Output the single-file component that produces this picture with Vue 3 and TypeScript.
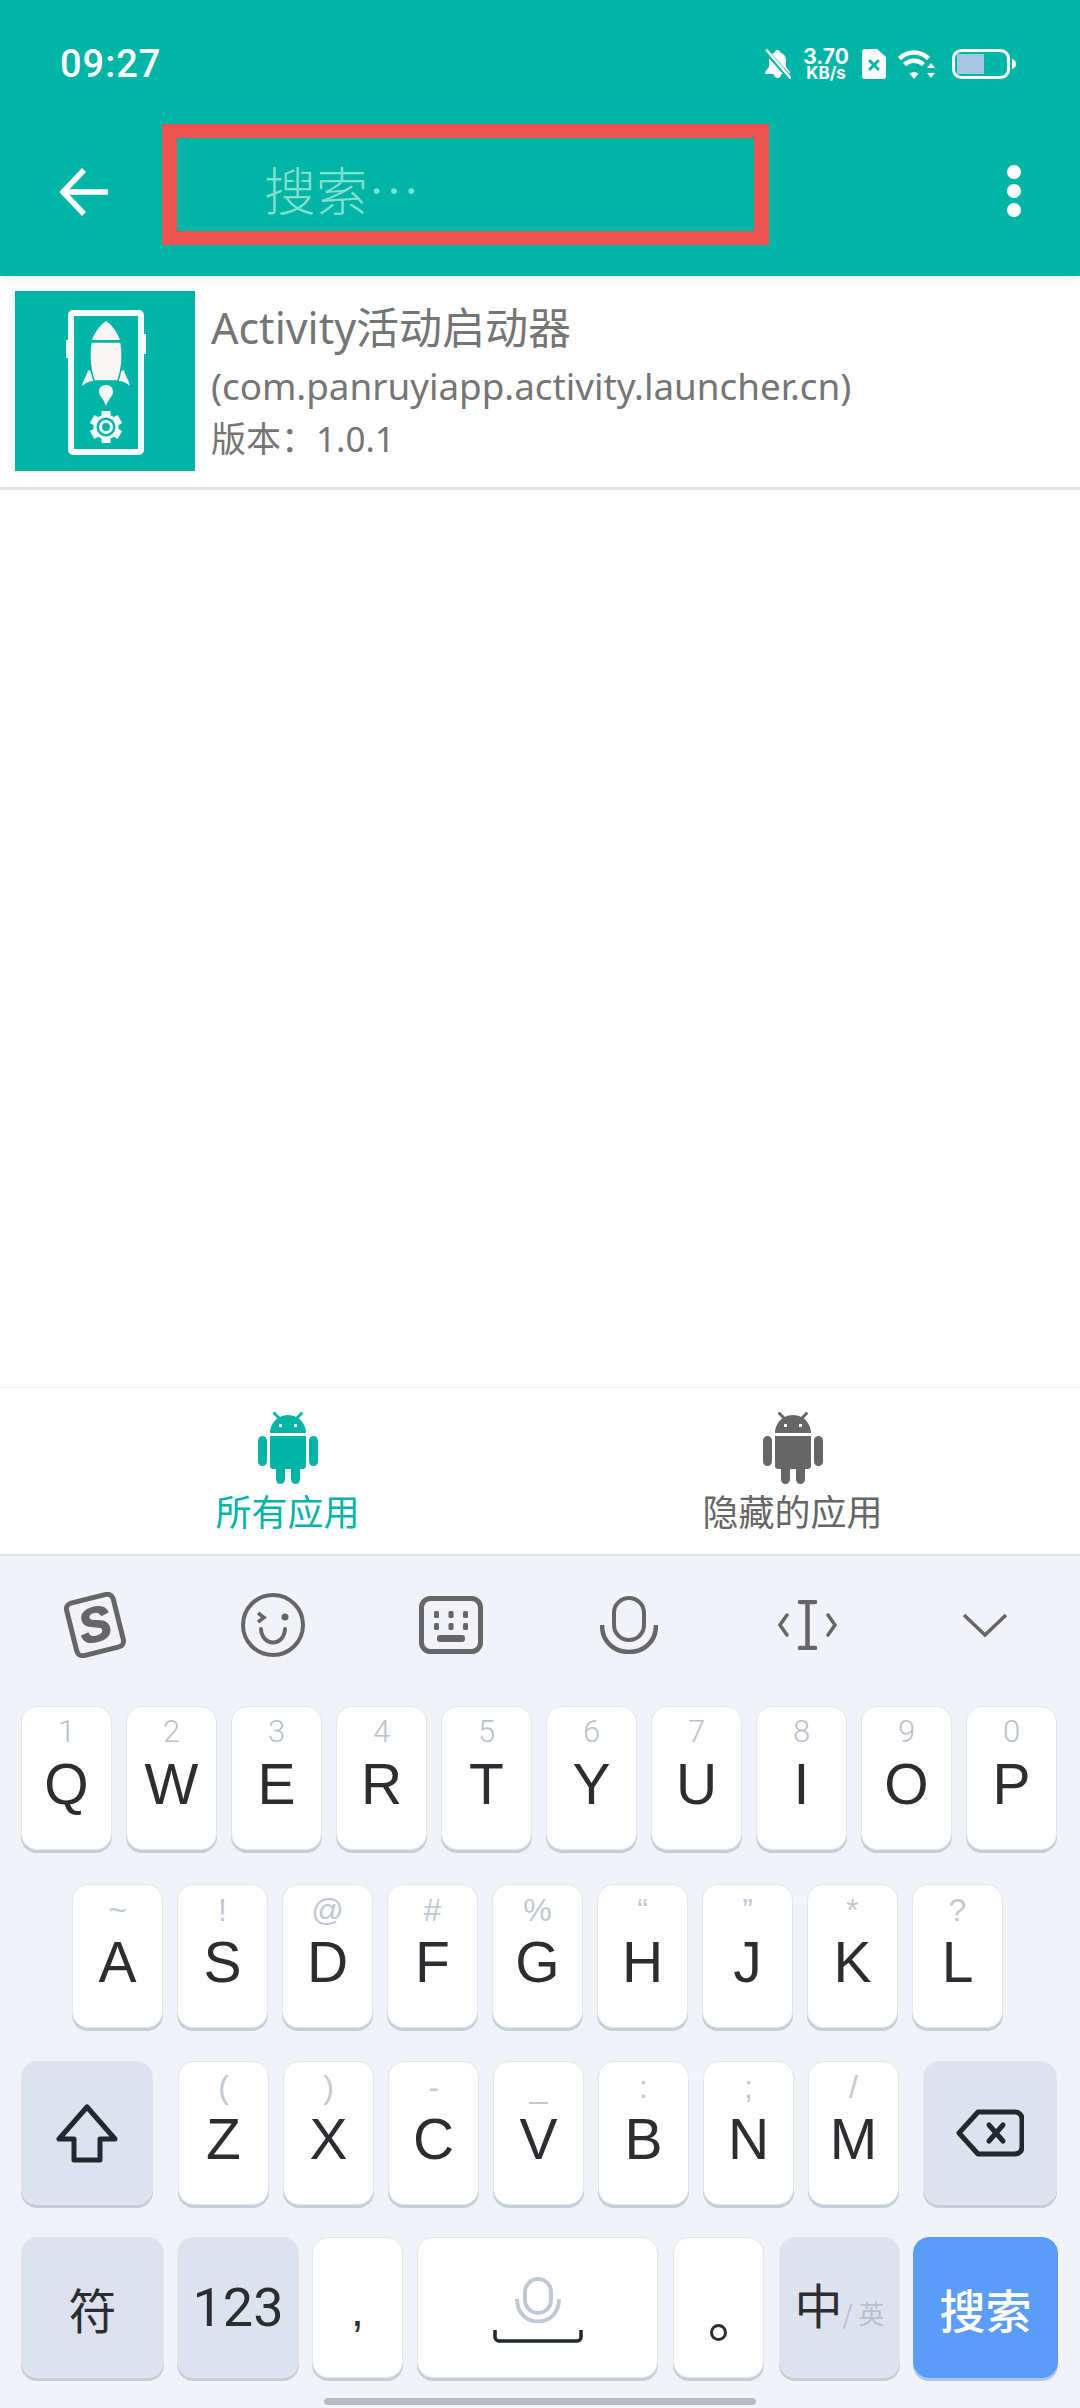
<template>
  <div class="screen">
    <header class="header">
      <div class="status">
        <span class="time">09:27</span>
        <div class="status-icons">
          <svg class="bell" viewBox="0 0 27 30">
            <path d="M13.500 1c-1.600 0-2.600 1-2.800 2.400C7 4.600 5 7.500 5 11.500v6.500L1.500 22.500c-.8 1.100-.2 2.500 1.200 2.500h7c.3 2.400 1.700 4 3.800 4s3.500-1.600 3.800-4h7c1.400 0 2-1.400 1.200-2.500L22 18v-6.500c0-4-2-6.900-5.700-8.100C16.100 2 15.100 1 13.500 1z" fill="#fff" />
            <path d="M2 2l23 26" stroke="#00b4a6" stroke-width="5" />
            <path d="M3 1.500l23 27" stroke="#fff" stroke-width="2.600" stroke-linecap="round" />
          </svg>
          <div class="speed">
            <span class="speed-num">3.70</span>
            <span class="speed-unit">KB/s</span>
          </div>
          <svg class="sim" viewBox="0 0 24 30">
            <path d="M3 0h12l9 8v19a3 3 0 0 1-3 3H3a3 3 0 0 1-3-3V3a3 3 0 0 1 3-3z" fill="#fff" />
            <path d="M8 12l8 8M16 12l-8 8" stroke="#00b4a6" stroke-width="3" stroke-linecap="round" />
          </svg>
          <svg class="wifi" viewBox="0 0 37 30">
            <path d="M1.500 9.500C10 1.500 22 1.500 30.500 9.500" fill="none" stroke="#fff" stroke-width="4.500" />
            <path d="M6.500 15.500C12 10.500 20 10.500 25.500 15.500" fill="none" stroke="#fff" stroke-width="4.500" />
            <path d="M11.500 24.500c3-2 6-2 9 0L16 30z" fill="#fff" />
            <path d="M33 14l4 5h-8zM33 29l-4-5h8z" fill="#fff" />
          </svg>
          <svg class="battery" viewBox="0 0 64 30">
            <rect x="1.500" y="1.500" width="55" height="27" rx="8" fill="none" stroke="#fff" stroke-width="3" />
            <rect x="5" y="5" width="27" height="20" fill="#a9c5e4" />
            <path d="M60 10c2.500.5 4 2.500 4 5s-1.500 4.500-4 5z" fill="#fff" />
          </svg>
        </div>
      </div>
      <div class="toolbar">
        <svg class="back" viewBox="0 0 48 48">
          <path d="M24 2L3 24l21 22M4 24h44" fill="none" stroke="#fff" stroke-width="5.500" />
        </svg>
        <div class="search-box">
          <span class="placeholder">搜索…</span>
        </div>
        <div class="more">
          <i></i><i></i><i></i>
        </div>
      </div>
    </header>

    <div class="app-row">
      <svg class="app-icon" viewBox="0 0 180 180">
        <rect width="180" height="180" fill="#00b4a6" />
        <rect x="56" y="22" width="70" height="139" rx="2" fill="none" stroke="#f6fbfa" stroke-width="6" />
        <rect x="51" y="49" width="3" height="18" fill="#f6fbfa" />
        <rect x="128" y="43" width="3" height="20" fill="#f6fbfa" />
        <path d="M91 30c6 4 11 11 14 19H77c3-8 8-15 14-19z" fill="#f8f6f5" />
        <path d="M73 79c-1 6-5 10-6 16 3-3 7-5 12-5l2-8zM109 79c1 6 5 10 6 16-3-3-7-5-12-5l-2-8z" fill="#f8f6f5" />
        <path d="M76 51h30c2 12 1 27-3 39H79c-4-12-5-27-3-39z" fill="#f8f6f5" stroke="#00b4a6" stroke-width="1.500" />
        <path d="M91 94c5 0 7 3 7 7 0 4-5 7-7 14-2-7-7-10-7-14 0-4 2-7 7-7z" fill="#f8f6f5" />
        <g fill="#f6fbfa">
          <rect v-for="a in [0, 60, 120, 180, 240, 300]" :key="a" x="86.500" y="120" width="9" height="7" :transform="`rotate(${a} 91 136)`" />
          <circle cx="91" cy="136" r="12.500" />
        </g>
        <circle cx="91" cy="136" r="9.500" fill="#00b4a6" />
        <circle cx="91" cy="136" r="7" fill="#f6fbfa" />
        <circle cx="91" cy="136" r="4" fill="#00b4a6" />
      </svg>
      <div class="app-info">
        <div class="app-title">Activity活动启动器</div>
        <div class="app-pkg">(com.panruyiapp.activity.launcher.cn)</div>
        <div class="app-ver">版本：1.0.1</div>
      </div>
    </div>

    <div class="spacer"></div>

    <nav class="tabs">
      <div v-for="t in tabs" :key="t.label" :class="['tab', { active: t.active }]">
        <svg class="android" viewBox="2 0 20 24">
          <path d="M6 18c0 .55.45 1 1 1h1v3.500c0 .83.67 1.500 1.500 1.500s1.500-.67 1.500-1.500V19h2v3.500c0 .83.67 1.500 1.500 1.500s1.500-.67 1.500-1.500V19h1c.55 0 1-.45 1-1V8H6v10zM3.500 8C2.670 8 2 8.670 2 9.500v7c0 .83.67 1.500 1.500 1.500S5 17.330 5 16.500v-7C5 8.670 4.330 8 3.500 8zm17 0c-.83 0-1.500.67-1.500 1.500v7c0 .83.67 1.500 1.500 1.500s1.500-.67 1.500-1.500v-7c0-.83-.67-1.500-1.500-1.500zm-4.970-5.840l1.300-1.300c.2-.2.2-.51 0-.71-.2-.2-.51-.2-.71 0l-1.480 1.480C13.850 1.230 12.950 1 12 1c-.96 0-1.860.23-2.660.63L7.850.15c-.2-.2-.51-.2-.71 0-.2.2-.2.51 0 .71l1.310 1.310C6.970 3.260 6 5.010 6 7h12c0-1.990-.97-3.750-2.470-4.840zM10 5H9V4h1v1zm5 0h-1V4h1v1z" />
        </svg>
        <span>{{ t.label }}</span>
      </div>
    </nav>

    <section class="keyboard">
      <div class="kb-tools">
        <svg class="tool" style="width:66px;height:66px" viewBox="0 0 66 66">
          <g transform="rotate(-14 33 33)">
            <rect x="9" y="6" width="48" height="54" rx="6" fill="none" stroke="#666" stroke-width="5" />
            <text x="33" y="49" text-anchor="middle" class="sogou">S</text>
          </g>
        </svg>
        <svg class="tool" style="width:64px;height:64px" viewBox="0 0 64 64">
          <circle cx="32" cy="32" r="30" fill="none" stroke="#666" stroke-width="4" />
          <path d="M17 20l6 4.500-6 4.500" fill="none" stroke="#666" stroke-width="3.500" />
          <circle cx="44" cy="24" r="3.500" fill="#666" />
          <path d="M20 36c1 18 23 18 24 0" fill="none" stroke="#666" stroke-width="4" stroke-linecap="round" />
        </svg>
        <svg class="tool" style="width:64px;height:58px" viewBox="0 0 64 58">
          <rect x="2.500" y="2.500" width="59" height="53" rx="9" fill="none" stroke="#666" stroke-width="5" />
          <g fill="#666">
            <rect x="15" y="15" width="5" height="7" rx="1.500" />
            <rect x="29.500" y="15" width="5" height="7" rx="1.500" />
            <rect x="44" y="15" width="5" height="7" rx="1.500" />
            <rect x="15" y="27" width="5" height="7" rx="1.500" />
            <rect x="29.500" y="27" width="5" height="7" rx="1.500" />
            <rect x="44" y="27" width="5" height="7" rx="1.500" />
            <rect x="18" y="39" width="28" height="7" rx="3" />
          </g>
        </svg>
        <svg class="tool" style="width:58px;height:58px" viewBox="0 0 58 58">
          <rect x="14" y="2" width="30" height="42" rx="15" fill="none" stroke="#666" stroke-width="4" />
          <path d="M2 29c0 36 54 36 54 0" fill="none" stroke="#666" stroke-width="4.500" />
        </svg>
        <svg class="tool" style="width:59px;height:50px" viewBox="0 0 59 50">
          <path d="M22 2h15M22 48h15M29.500 2v46" stroke="#666" stroke-width="4.500" stroke-linecap="round" />
          <path d="M9 15l-7 10 7 10M50 15l7 10-7 10" fill="none" stroke="#666" stroke-width="3.500" stroke-linecap="round" />
        </svg>
        <svg class="tool" style="width:46px;height:24px" viewBox="0 0 46 24">
          <path d="M2 2l21 20L44 2" fill="none" stroke="#666" stroke-width="3.500" />
        </svg>
      </div>

      <div class="kb-row first">
        <button v-for="k in row1" :key="k[0]" class="key">
          <span class="hint">{{ k[1] }}</span>
          <span class="letter">{{ k[0] }}</span>
        </button>
      </div>
      <div class="kb-row second">
        <button v-for="k in row2" :key="k[0]" class="key">
          <span class="hint mark">{{ k[1] }}</span>
          <span class="letter">{{ k[0] }}</span>
        </button>
      </div>
      <div class="kb-row third">
        <button class="key fn shift">
          <svg width="62" height="59" viewBox="0 0 62 59">
            <path d="M31 3L3 35h15v21h26V35h15z" fill="none" stroke="#23272e" stroke-width="5" stroke-linejoin="round" />
          </svg>
        </button>
        <button v-for="k in row3" :key="k[0]" class="key">
          <span class="hint mark">{{ k[1] }}</span>
          <span class="letter">{{ k[0] }}</span>
        </button>
        <button class="key fn del">
          <svg width="68" height="48" viewBox="0 0 68 48">
            <path d="M22 3h37a7 7 0 0 1 7 7v28a7 7 0 0 1-7 7H22L3 24z" fill="none" stroke="#23272e" stroke-width="5" stroke-linejoin="round" />
            <path d="M33 16l14 16M47 16L33 32" stroke="#23272e" stroke-width="5" stroke-linecap="round" />
          </svg>
        </button>
      </div>
      <div class="kb-row fourth">
        <button class="key fn sym"><span class="sym-text">符</span></button>
        <button class="key fn num"><span class="num-text">123</span></button>
        <button class="key punct"><span class="comma">,</span></button>
        <button class="key space">
          <svg width="46" height="46" viewBox="0 0 46 46">
            <rect x="10" y="2" width="26" height="34" rx="13" fill="none" stroke="#c0c8d8" stroke-width="4" />
            <path d="M2 22c0 30 42 30 42 0" fill="none" stroke="#c0c8d8" stroke-width="4" />
          </svg>
          <svg width="90" height="13" viewBox="0 0 90 13">
            <path d="M2 0v7a4 4 0 0 0 4 4h78a4 4 0 0 0 4-4V0" fill="none" stroke="#23272e" stroke-width="3.500" />
          </svg>
        </button>
        <button class="key punct period"><span class="dot"></span></button>
        <button class="key fn lang"><span class="zh">中</span><span class="en">/ 英</span></button>
        <button class="key go">搜索</button>
      </div>
      <div class="home-bar"></div>
    </section>
  </div>
</template>

<script setup lang="ts">
interface Tab { label: string; active: boolean }

const tabs: Tab[] = [
  { label: '所有应用', active: true },
  { label: '隐藏的应用', active: false },
]

const row1 = [['Q', '1'], ['W', '2'], ['E', '3'], ['R', '4'], ['T', '5'], ['Y', '6'], ['U', '7'], ['I', '8'], ['O', '9'], ['P', '0']]
const row2 = [['A', '~'], ['S', '!'], ['D', '@'], ['F', '#'], ['G', '%'], ['H', '“'], ['J', '”'], ['K', '*'], ['L', '?']]
const row3 = [['Z', '('], ['X', ')'], ['C', '-'], ['V', '_'], ['B', ':'], ['N', ';'], ['M', '/']]
</script>

<style>
html, body { margin: 0; background: #fff; }
</style>

<style scoped>
.screen {
  width: 1080px;
  height: 2408px;
  display: flex;
  flex-direction: column;
  overflow: hidden;
  background: #fff;
  font-family: "Noto Sans", "Noto Sans CJK SC", sans-serif;
}
.header {
  height: 276px;
  flex-shrink: 0;
  background: #00b4a6;
  box-shadow: 0 3px 8px rgba(0, 0, 0, 0.08);
  z-index: 1;
}
.status {
  height: 124px;
  padding: 0 64px 0 60px;
  display: flex;
  justify-content: space-between;
  align-items: flex-start;
  box-sizing: border-box;
}
.time {
  margin-top: 41px;
  font: 500 38px/46px Roboto, sans-serif;
  letter-spacing: 1px;
  color: #fff;
}
.status-icons {
  display: flex;
  align-items: center;
  margin-top: 47px;
  height: 34px;
}
.bell { width: 27px; height: 30px; }
.speed {
  width: 46px;
  margin-left: 12px;
  display: flex;
  flex-direction: column;
  align-items: center;
  color: #fff;
  font-family: Inter, sans-serif;
  font-weight: 700;
  line-height: 1;
}
.speed-num { font-size: 21px; height: 19px; line-height: 19px; }
.speed-unit { font-size: 17px; height: 15px; line-height: 15px; }
.sim { width: 24px; height: 30px; margin-left: 13px; }
.wifi { width: 37px; height: 30px; margin-left: 12px; }
.battery { width: 64px; height: 30px; margin-left: 17px; }
.toolbar {
  display: flex;
  align-items: flex-start;
}
.back { width: 48px; height: 48px; margin: 44px 0 0 60px; }
.search-box {
  width: 607px;
  height: 121px;
  margin-left: 54px;
  box-sizing: border-box;
  border: solid #ef5350;
  border-width: 14px 15px;
  display: flex;
  align-items: center;
  padding: 8px 0 0 87px;
}
.placeholder {
  font: 300 52px/60px "Noto Sans CJK SC", sans-serif;
  color: #7fe0cf;
}
.more {
  margin: 41px 0 0 238px;
  display: flex;
  flex-direction: column;
  gap: 5px;
}
.more i {
  display: block;
  width: 14px;
  height: 14px;
  border-radius: 50%;
  background: #fff;
}
.app-row {
  height: 214px;
  box-sizing: border-box;
  flex-shrink: 0;
  display: flex;
  padding: 15px 0 0 15px;
  border-bottom: 3px solid #e2e2e2;
}
.app-icon { width: 180px; height: 180px; flex-shrink: 0; }
.app-info {
  margin-left: 16px;
  color: #757575;
  display: flex;
  flex-direction: column;
}
.app-title { font-size: 43px; line-height: 52px; margin-top: 11px; }
.app-pkg { font-size: 36.800px; line-height: 52px; margin-top: 6px; }
.app-ver { font-size: 35px; line-height: 52px; margin-top: 1px; }
.spacer { flex: 1; }
.tabs {
  height: 169px;
  flex-shrink: 0;
  display: flex;
  padding: 0 35px;
  box-sizing: border-box;
  border-top: 1px solid #f3f3f3;
  border-bottom: 2px solid #dfe3e8;
  box-shadow: 0 -2px 4px rgba(0, 0, 0, 0.02);
}
.tab {
  flex: 1;
  display: flex;
  flex-direction: column;
  align-items: center;
  padding-top: 24px;
  color: #666;
  fill: #666;
  font-size: 36px;
  line-height: 44px;
}
.tab.active { color: #00b4a6; fill: #00b4a6; }
.android { width: 60px; height: 72px; margin-bottom: 7px; }
.keyboard {
  height: 852px;
  flex-shrink: 0;
  background: #f1f3f8;
  display: flex;
  flex-direction: column;
  position: relative;
}
.kb-tools {
  height: 150px;
  flex-shrink: 0;
  display: grid;
  grid-template-columns: repeat(6, 178px);
  padding: 0 0 12px 6px;
  align-items: center;
  justify-items: center;
  box-sizing: border-box;
}
.sogou {
  font: italic 700 48px "Liberation Sans", sans-serif;
  fill: #666;
  stroke: #666;
  stroke-width: 1.5px;
}
.kb-row {
  display: flex;
  gap: 14px;
  height: 144px;
  margin-bottom: 33px;
  flex-shrink: 0;
}
.kb-row.first { padding-left: 21px; margin-bottom: 34px; }
.kb-row.second { padding-left: 72px; }
.kb-row.third { padding-left: 21px; margin-bottom: 32px; }
.kb-row.fourth { padding-left: 21px; margin-bottom: 0; height: 141px; gap: 13px; }
.key {
  width: 91px;
  height: 100%;
  flex-shrink: 0;
  padding: 0;
  box-sizing: border-box;
  border: 1px solid #e3e6ec;
  border-radius: 16px;
  background: #fff;
  box-shadow: 0 3px 0 #c6ccd8;
  display: flex;
  flex-direction: column;
  align-items: center;
  color: #2b2d31;
  font-family: "Liberation Sans", sans-serif;
}
.hint {
  margin-top: 10px;
  height: 30px;
  font: 300 31px/30px Roboto, sans-serif;
  color: #b8c0ce;
}
.hint.mark {
  font: 400 32px/30px "Liberation Sans", sans-serif;
  color: #c2c8d3;
}
.letter {
  margin-top: 4px;
  font-size: 57px;
  line-height: 66px;
}
.fn { background: #dde3ee; justify-content: center; }
.shift { width: 132px; margin-right: 11px; }
.del { width: 134px; margin-left: 10px; }
.sym { width: 143px; }
.num { width: 122px; }
.space { width: 241px; margin-left: 1px; padding-top: 39px; gap: 7px; }
.period { margin-left: 2px; }
.comma {
  margin-top: 42px;
  font-size: 46px;
  line-height: 60px;
}
.dot {
  margin-top: 86px;
  width: 17px;
  height: 17px;
  box-sizing: border-box;
  border: 3.500px solid #2b2d31;
  border-radius: 50%;
}
.sym-text {
  font: 48px/56px "Noto Sans CJK SC", sans-serif;
}
.num-text {
  font: 54px/60px Roboto, sans-serif;
}
.lang {
  width: 121px;
  margin-left: 2px;
  flex-direction: row;
  align-items: flex-end;
  justify-content: center;
  padding-bottom: 46px;
}
.zh { font: 48px/56px "Noto Sans CJK SC", sans-serif; }
.en {
  font: 26px/32px "Noto Sans CJK SC", sans-serif;
  color: #b8c0ce;
  margin-bottom: 2px;
}
.go {
  width: 145px;
  background: #5a9cf8;
  border-color: #5a9cf8;
  box-shadow: 0 3px 0 #a8c8f5;
  color: #fff;
  justify-content: center;
  font: 500 46px/56px "Noto Sans CJK SC", sans-serif;
}
.home-bar {
  position: absolute;
  left: 324px;
  bottom: 3px;
  width: 432px;
  height: 7px;
  border-radius: 4px;
  background: #b8bbc2;
}
</style>
